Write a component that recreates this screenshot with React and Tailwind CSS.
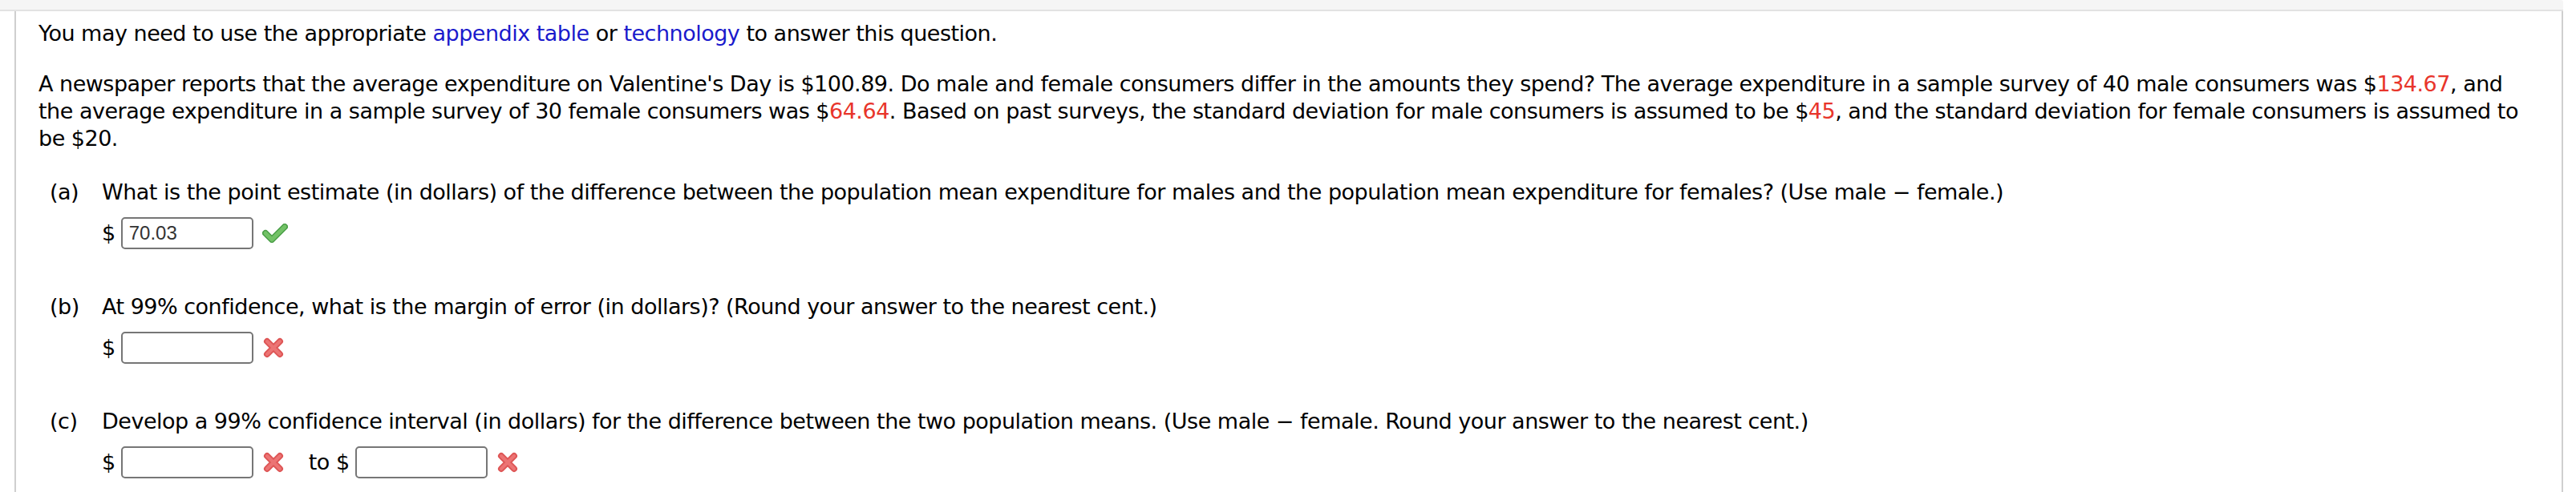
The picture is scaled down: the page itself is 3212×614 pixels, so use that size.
import React from "react";

// green tick shown after a correct answer
function Check() {
  return (
    <svg width="32" height="24" viewBox="0 0 32 24" className="ml-[11px]">
      <path d="M4 12 L12 20 L28 4" fill="none" stroke="#4a9e47" strokeWidth="8" strokeLinecap="round" strokeLinejoin="round" />
      <path d="M4 12 L12 20 L28 4" fill="none" stroke="#72c266" strokeWidth="5" strokeLinecap="round" strokeLinejoin="round" />
    </svg>
  );
}

// red cross shown after a wrong / empty answer
function Cross() {
  return (
    <svg width="30" height="28" viewBox="0 0 30 28" className="ml-[11px]">
      <g fill="none" strokeLinecap="round">
        <path d="M6 6 L22 22 M22 6 L6 22" stroke="#de5656" strokeWidth="8" />
        <path d="M6 6 L22 22 M22 6 L6 22" stroke="#ec7474" strokeWidth="4" />
      </g>
    </svg>
  );
}

function AnswerBox({ value = "" }) {
  return (
    <div className="ml-[7px] w-[165px] h-[40px] border-2 border-[#767676] rounded-[5px] bg-white flex items-center pl-[8px] font-['Liberation_Sans',Arial,sans-serif] text-[24px] tracking-normal text-[#333333]">
      {value}
    </div>
  );
}

function Part({ label, children, answer, top }) {
  return (
    <div className={`ml-[14px] ${top}`}>
      <div className="flex">
        <span className="w-[65px] shrink-0">{label}</span>
        <span>{children}</span>
      </div>
      <div className="ml-[65px] mt-[14px] h-[40px] flex items-center">{answer}</div>
    </div>
  );
}

function Red({ children }) {
  return <span className="text-[#e8352b]">{children}</span>;
}

export default function App() {
  return (
    <div className="w-[3212px] h-[614px] overflow-hidden bg-white text-black font-['DejaVu_Sans',Verdana,sans-serif] text-[27px] leading-[34px] tracking-[-0.5px]">
      {/* TOP BAND */}
      <div className="w-[3196px] h-[14px] bg-[#f5f5f5] border-b-2 border-[#e2e2e2] rounded-tr-[3px]"></div>

      {/* QUESTION BOX */}
      <div className="ml-[18px] w-[3178px] h-[600px] border-x-2 border-[#cfcfcf] pl-[28px] pr-[32px] pt-[11px]">
        <p>
          You may need to use the appropriate{" "}
          <span className="text-[#1a1acc]">appendix table</span> or{" "}
          <span className="text-[#1a1acc]">technology</span> to answer this question.
        </p>

        <p className="mt-[29px]">
          A newspaper reports that the average expenditure on Valentine's Day is $100.89. Do male and female consumers
          differ in the amounts they spend? The average expenditure in a sample survey of 40 male consumers was $
          <Red>134.67</Red>, and the average expenditure in a sample survey of 30 female consumers was $
          <Red>64.64</Red>. Based on past surveys, the standard deviation for male consumers is assumed to be $
          <Red>45</Red>, and the standard deviation for female consumers is assumed to be $20.
        </p>

        <Part
          label="(a)"
          top="mt-[33px]"
          answer={
            <>
              <span>$</span>
              <AnswerBox value="70.03" />
              <Check />
            </>
          }
        >
          What is the point estimate (in dollars) of the difference between the population mean expenditure for males
          and the population mean expenditure for females? (Use male − female.)
        </Part>

        <Part
          label="(b)"
          top="mt-[55px]"
          answer={
            <>
              <span>$</span>
              <AnswerBox />
              <Cross />
            </>
          }
        >
          At 99% confidence, what is the margin of error (in dollars)? (Round your answer to the nearest cent.)
        </Part>

        <Part
          label="(c)"
          top="mt-[55px]"
          answer={
            <>
              <span>$</span>
              <AnswerBox />
              <Cross />
              <span className="ml-[28px]">to $</span>
              <AnswerBox />
              <Cross />
            </>
          }
        >
          Develop a 99% confidence interval (in dollars) for the difference between the two population means. (Use
          male − female. Round your answer to the nearest cent.)
        </Part>
      </div>
    </div>
  );
}
